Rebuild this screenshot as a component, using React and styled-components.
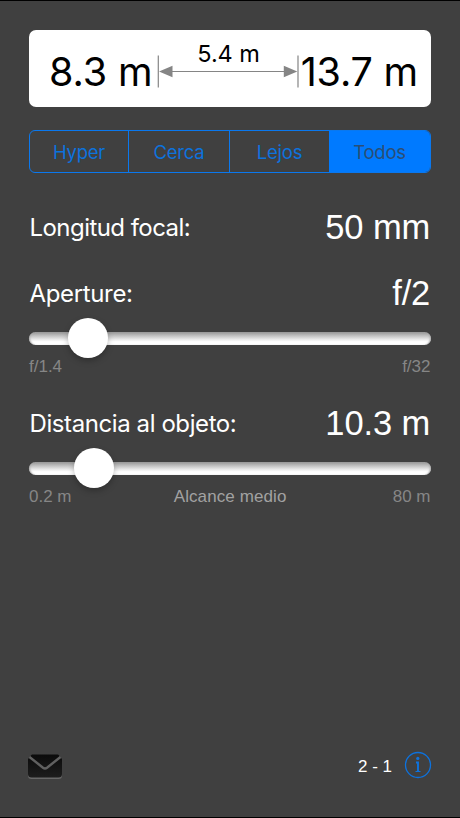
import styled, { createGlobalStyle } from 'styled-components';

const modes = ['Hyper', 'Cerca', 'Lejos', 'Todos'];

const Slider = ({ position }) => {
  return (
    <Track>
      <Thumb style={{ left: `${position}px` }} />
    </Track>
  );
};

const App = () => {
  return (
    <>
      <GlobalStyle />
      <Screen>
        <ResultPanel>
          <Limit $spacing='-0.1px'>8.3 m</Limit>
          <Span>
            <SpanLabel>5.4 m</SpanLabel>
            <svg width='142' height='34' viewBox='0 0 142 34'>
              <g stroke='#858585' strokeWidth='1.2'>
                <path d='M1.300 .5v32M141 .5v32M10 16.500h122' />
              </g>
              <path
                d='M2 16.500l13.500-5.700v11.400zM140.300 16.500l-13.500-5.700v11.400z'
                fill='#858585'
              />
            </svg>
          </Span>
          <Limit $spacing='-0.2px'>13.7 m</Limit>
        </ResultPanel>

        <Segments>
          {modes.map((mode) => (
            <Segment key={mode} type='button' $active={mode === 'Todos'}>
              {mode}
            </Segment>
          ))}
        </Segments>

        <Field $top='34px'>
          <Label $spacing='-0.55px'>Longitud focal:</Label>
          <Value>50 mm</Value>
        </Field>

        <Field $top='26px'>
          <Label $spacing='-0.35px'>Aperture:</Label>
          <Value>f/2</Value>
        </Field>
        <Slider position={39} />
        <Scale>
          <span>f/1.4</span>
          <span>f/32</span>
        </Scale>

        <Field $top='26px'>
          <Label $spacing='-0.41px'>Distancia al objeto:</Label>
          <Value>10.3 m</Value>
        </Field>
        <Slider position={45} />
        <Scale>
          <span>0.2 m</span>
          <Range>Alcance medio</Range>
          <span>80 m</span>
        </Scale>

        <Footer>
          <MailIcon />
          <Info>
            <Count>2 - 1</Count>
            <InfoIcon />
          </Info>
        </Footer>
      </Screen>
    </>
  );
};

const MailIcon = () => {
  return (
    <svg width='36' height='28' viewBox='0 0 36 28'>
      <defs>
        <linearGradient id='mail' x1='0' y1='0' x2='0' y2='1'>
          <stop offset='0' stopColor='#0b0b0b' />
          <stop offset='1' stopColor='#1d1d1d' />
        </linearGradient>
      </defs>
      <rect x='1' y='3' width='34' height='23' rx='3.500' fill='#686868' />
      <rect x='1' y='1.500' width='34' height='23' rx='3.500' fill='url(#mail)' />
      <path d='M.5 1h4.500l-2.500 3.500L1 6z' fill='#404040' />
      <path d='M35.500 1h-4.500l2.500 3.500L35 6z' fill='#404040' />
      <path
        d='M2.500 4L16 14.700q2 1.500 4 0L33.500 4'
        fill='none'
        stroke='#606060'
        strokeWidth='2.400'
      />
    </svg>
  );
};

const InfoIcon = () => {
  return (
    <svg width='28' height='28' viewBox='0 0 28 28'>
      <circle
        cx='14'
        cy='14'
        r='12.500'
        fill='none'
        stroke='#0d72dd'
        strokeWidth='1.300'
      />
      <circle cx='13.800' cy='7.400' r='1.600' fill='#0d72dd' />
      <path
        d='M12 11.500h2v9'
        fill='none'
        stroke='#0d72dd'
        strokeWidth='1.900'
      />
      <path d='M11.500 20.500h5' stroke='#0d72dd' strokeWidth='1' />
    </svg>
  );
};

const GlobalStyle = createGlobalStyle`
  * {
    box-sizing: border-box;
  }
  body {
    margin: 0;
    background: #404040;
  }
`;

const Screen = styled.main`
  display: flex;
  flex-direction: column;
  width: 460px;
  height: 818px;
  padding: 29px 29px 0;
  background: #404040;
  border-top: 1px solid #000;
  border-bottom: 1px solid #000;
  font-family: Inter, sans-serif;
  color: #fff;
`;

const ResultPanel = styled.section`
  display: grid;
  grid-template-columns: 108px 142px 1fr;
  height: 77px;
  padding: 11px 13px 0 20px;
  background: #fff;
  border-radius: 7px;
  color: #000;
`;

const Limit = styled.span`
  padding-top: 7px;
  font-size: 39.5px;
  line-height: 48px;
  letter-spacing: ${({ $spacing }) => $spacing};
  white-space: nowrap;

  &:last-child {
    justify-self: end;
  }
`;

const Span = styled.div`
  display: flex;
  flex-direction: column;
  align-items: center;

  svg {
    margin-top: -11px;
  }
`;

const SpanLabel = styled.span`
  padding-left: 1px;
  font-size: 23.5px;
  line-height: 25px;
  letter-spacing: -0.1px;
`;

const Segments = styled.nav`
  display: grid;
  grid-template-columns: 98px 101px 100px 1fr;
  height: 43px;
  margin-top: 23px;
  border: 1px solid #0a78ee;
  border-radius: 6px;
  overflow: hidden;
`;

const Segment = styled.button`
  padding: 1px 0 0;
  border: 0;
  border-left: ${({ $active }) => ($active ? '0' : '1px solid #0a78ee')};
  background: ${({ $active }) => ($active ? '#007aff' : 'transparent')};
  color: ${({ $active }) => ($active ? '#2b4e75' : '#0d72dd')};
  font-family: inherit;
  font-size: 18.5px;
  letter-spacing: -0.25px;

  &:first-child {
    border-left: 0;
  }
`;

const Field = styled.div`
  display: flex;
  align-items: center;
  justify-content: space-between;
  height: 40px;
  margin-top: ${({ $top }) => $top};
`;

const Label = styled.span`
  padding: 2px 0 0 0.5px;
  font-size: 24px;
  line-height: 40px;
  letter-spacing: ${({ $spacing }) => $spacing};
`;

const Value = styled.span`
  padding-right: 0.8px;
  font-family: 'Liberation Sans', sans-serif;
  font-size: 34.5px;
  line-height: 40px;
  letter-spacing: -0.1px;
`;

const Track = styled.div`
  position: relative;
  height: 13px;
  margin-top: 19px;
  border-radius: 7px;
  background: linear-gradient(#949494, #c0c0c0 28%, #ebebeb 58%, #fff 75%);
  box-shadow: inset 2px 0 2px -1px #aaa, inset -2px 0 2px -1px #aaa;
`;

const Thumb = styled.span`
  position: absolute;
  top: -14px;
  width: 40px;
  height: 40px;
  border-radius: 50%;
  background: #fff;
  box-shadow: 0 3px 6px rgba(0, 0, 0, 0.25);
`;

const Scale = styled.div`
  display: flex;
  justify-content: space-between;
  margin-top: 12px;
  padding-right: 0.5px;
  font-family: 'Liberation Sans', sans-serif;
  font-size: 17px;
  line-height: 20px;
  color: #868686;
`;

const Range = styled.span`
  padding-right: 4px;
  letter-spacing: 0.1px;
  color: #a2a2a2;
`;

const Footer = styled.footer`
  display: flex;
  align-items: center;
  justify-content: space-between;
  height: 30px;
  margin: auto -1px 37px -2px;

  > svg {
    margin-top: 4px;
  }
`;

const Info = styled.div`
  display: flex;
  align-items: center;
  gap: 12px;
`;

const Count = styled.span`
  padding-top: 3px;
  font-family: 'Liberation Sans', sans-serif;
  font-size: 17px;
`;

export default App;
